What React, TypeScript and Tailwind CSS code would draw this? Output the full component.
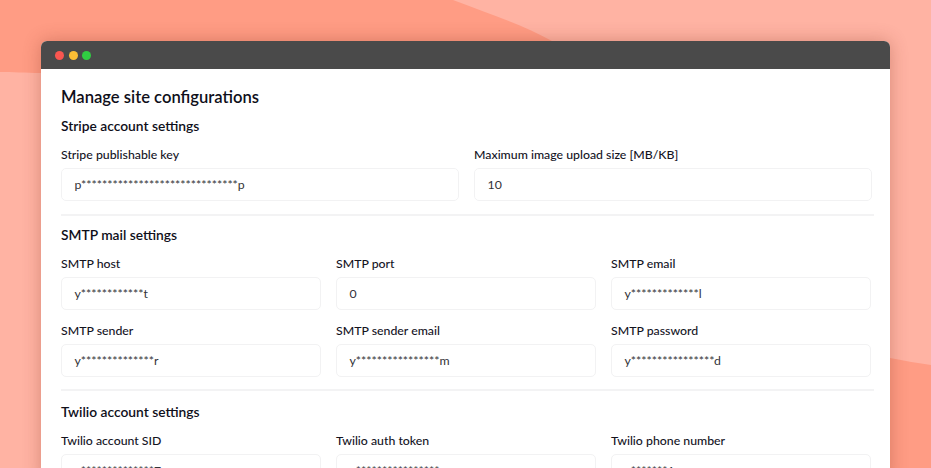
function Field({ label, value }: { label: string; value: string }) {
  return (
    <div className="flex min-w-0 flex-col">
      <label className="h-[15px] text-[12.3px] font-medium leading-[15px] text-[#14141f]">{label}</label>
      <div className="mt-[6px] flex h-[33px] items-center rounded-[5px] border-[1.5px] border-[#f2f2f3] bg-white pl-[12.5px] pt-[2px] text-[12.3px] text-[#333338]">
        {value}
      </div>
    </div>
  );
}

function Heading({ children }: { children: string }) {
  return <h2 className="text-[13.8px] font-semibold leading-[18px] text-[#0f0f1a]">{children}</h2>;
}

export default function App() {
  return (
    <div className="relative h-[468px] w-[931px] overflow-hidden bg-[#ffb3a3] font-['Lato','Noto_Sans',sans-serif]">
      <svg className="absolute inset-0" width="931" height="468" viewBox="0 0 931 468" fill="none">
        <path d="M0 0H453C490 14 525 26 552 41L300 75C200 80 120 70 41 73C25 73 12 72 0 72Z" fill="#ff9c84" />
        <path d="M890 358C905 361 918 363 931 365V468H600L890 358Z" fill="#ff9c84" />
      </svg>
      <div className="relative pl-[41px] pt-[41px]">
        <div className="h-[440px] w-[849px] overflow-hidden rounded-t-[6px] bg-white shadow-[0_0_18px_rgba(120,40,20,0.3)]">
          <div className="flex h-[28px] items-center gap-[4.5px] bg-[#4a4a4a] pl-[14px]">
            <span className="h-[9px] w-[9px] rounded-full bg-[#f95650]" />
            <span className="h-[9px] w-[9px] rounded-full bg-[#fdbf35]" />
            <span className="h-[9px] w-[9px] rounded-full bg-[#30cd42]" />
          </div>
          <div className="pl-[20px] pr-[16px] pt-[18px]">
            <h1 className="text-[16.6px] font-semibold leading-[20px] text-[#0f0f1a]">Manage site configurations</h1>
            <div className="mt-[10px]"><Heading>Stripe account settings</Heading></div>
            <div className="mt-[12px] grid grid-cols-[398px_398px] gap-x-[15px]">
              <Field label="Stripe publishable key" value="p******************************p" />
              <Field label="Maximum image upload size [MB/KB]" value="10" />
            </div>
            <div className="mt-[13px] h-[2px] w-[813px] bg-[#f3f3f4]" />
            <div className="mt-[10px]"><Heading>SMTP mail settings</Heading></div>
            <div className="mt-[12px] grid grid-cols-[260px_260px_260px] gap-x-[15px] gap-y-[13px]">
              <Field label="SMTP host" value="y************t" />
              <Field label="SMTP port" value="0" />
              <Field label="SMTP email" value="y*************l" />
              <Field label="SMTP sender" value="y**************r" />
              <Field label="SMTP sender email" value="y****************m" />
              <Field label="SMTP password" value="y****************d" />
            </div>
            <div className="mt-[12px] h-[2px] w-[813px] bg-[#f3f3f4]" />
            <div className="mt-[12px]"><Heading>Twilio account settings</Heading></div>
            <div className="mt-[12px] grid grid-cols-[260px_260px_260px] gap-x-[15px]">
              <Field label="Twilio account SID" value="y**************7" />
              <Field label="Twilio auth token" value="y****************" />
              <Field label="Twilio phone number" value="y*******1" />
            </div>
          </div>
        </div>
      </div>
    </div>
  );
}
